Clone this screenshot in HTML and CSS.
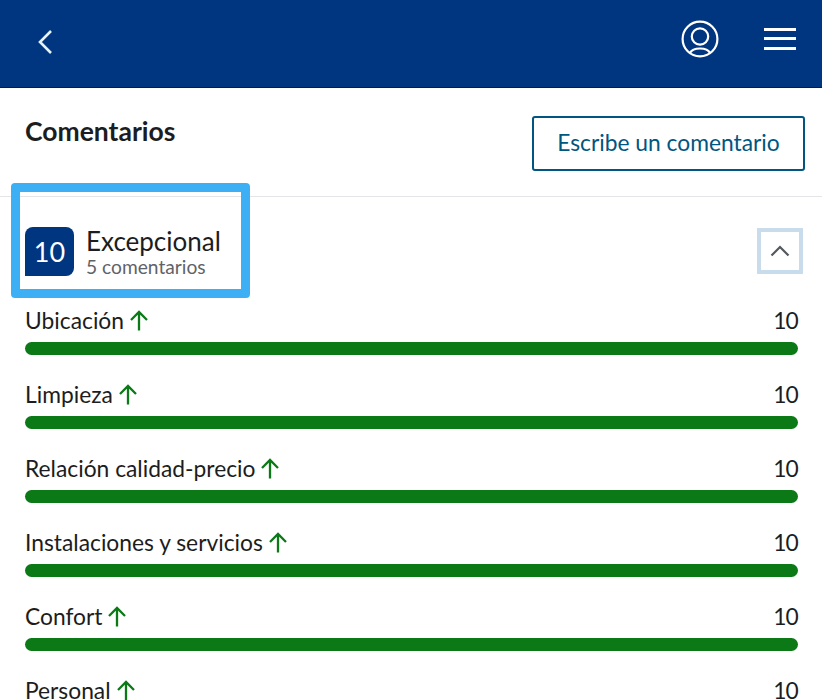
FILE: index.html
```html
<!DOCTYPE html>
<html lang="es">
<head>
    <meta charset="UTF-8">
    <meta name="viewport" content="width=device-width, initial-scale=1.0">
    <title>Comentarios</title>
    <link rel="stylesheet" href="styles.css">
</head>
<body>
    <header class="topbar">
        <svg class="back-icon" width="18" height="26" viewBox="0 0 18 26"><path d="M14 2 L3 13 L14 24" fill="none" stroke="#e6f3fb" stroke-width="2.6"/></svg>
        <div class="topbar-actions">
            <svg width="38" height="38" viewBox="0 0 38 38" fill="none" stroke="#fff" stroke-width="2.2">
                <circle cx="19" cy="19" r="17.4"/>
                <circle cx="19" cy="16.5" r="8.2"/>
                <path d="M9 33 C12 27 26 27 29 33"/>
            </svg>
            <div class="menu-icon"><span></span><span></span><span></span></div>
        </div>
    </header>

    <section class="title-row">
        <h1>Comentarios</h1>
        <button type="button" class="write-btn">Escribe un comentario</button>
    </section>

    <section class="summary">
        <div class="highlight"></div>
        <div class="score">
            <div class="score-badge">10</div>
            <div>
                <div class="score-label">Excepcional</div>
                <div class="score-count">5 comentarios</div>
            </div>
        </div>
        <div class="collapse-btn">
            <svg width="20" height="12" viewBox="0 0 20 12"><path d="M1.5 10.5 L10 2 L18.5 10.5" fill="none" stroke="#55595e" stroke-width="2.2"/></svg>
        </div>
    </section>

    <section class="ratings">
        <div class="rating">
            <div class="rating-head">
                <span class="rating-name">Ubicación <svg class="up" width="20" height="21" viewBox="0 0 20 21"><path d="M10 20.5 V2 M2 10 L10 2 L18 10" fill="none" stroke="#0b7a16" stroke-width="2.3"/></svg></span>
                <span class="rating-value">10</span>
            </div>
            <div class="bar"></div>
        </div>
        <div class="rating">
            <div class="rating-head">
                <span class="rating-name">Limpieza <svg class="up" width="20" height="21" viewBox="0 0 20 21"><path d="M10 20.5 V2 M2 10 L10 2 L18 10" fill="none" stroke="#0b7a16" stroke-width="2.3"/></svg></span>
                <span class="rating-value">10</span>
            </div>
            <div class="bar"></div>
        </div>
        <div class="rating">
            <div class="rating-head">
                <span class="rating-name">Relación calidad-precio <svg class="up" width="20" height="21" viewBox="0 0 20 21"><path d="M10 20.5 V2 M2 10 L10 2 L18 10" fill="none" stroke="#0b7a16" stroke-width="2.3"/></svg></span>
                <span class="rating-value">10</span>
            </div>
            <div class="bar"></div>
        </div>
        <div class="rating">
            <div class="rating-head">
                <span class="rating-name">Instalaciones y servicios <svg class="up" width="20" height="21" viewBox="0 0 20 21"><path d="M10 20.5 V2 M2 10 L10 2 L18 10" fill="none" stroke="#0b7a16" stroke-width="2.3"/></svg></span>
                <span class="rating-value">10</span>
            </div>
            <div class="bar"></div>
        </div>
        <div class="rating">
            <div class="rating-head">
                <span class="rating-name">Confort <svg class="up" width="20" height="21" viewBox="0 0 20 21"><path d="M10 20.5 V2 M2 10 L10 2 L18 10" fill="none" stroke="#0b7a16" stroke-width="2.3"/></svg></span>
                <span class="rating-value">10</span>
            </div>
            <div class="bar"></div>
        </div>
        <div class="rating">
            <div class="rating-head">
                <span class="rating-name">Personal <svg class="up" width="20" height="21" viewBox="0 0 20 21"><path d="M10 20.5 V2 M2 10 L10 2 L18 10" fill="none" stroke="#0b7a16" stroke-width="2.3"/></svg></span>
                <span class="rating-value">10</span>
            </div>
            <div class="bar"></div>
        </div>
    </section>
</body>
</html>
```

FILE: styles.css
```css
html, body {
    height: 700px;
    overflow: hidden;
}
body {
    margin: 0;
    font-family: Lato, "Open Sans", sans-serif;
    color: #1c1d20;
    background-color: #fff;
}
.topbar {
    height: 77px;
    background-color: #00357f;
    border-bottom: 1px solid #0b1a33;
    display: flex;
    align-items: center;
    justify-content: space-between;
    padding: 0 26px 10px 37px;
}
.back-icon {
    margin-top: 6px;
}
.topbar-actions {
    display: flex;
    align-items: center;
    gap: 45px;
}
.menu-icon {
    display: flex;
    flex-direction: column;
    gap: 6.5px;
    width: 32px;
}
.menu-icon span {
    height: 3px;
    background-color: #fff;
}
.title-row {
    height: 108px;
    border-bottom: 1px solid #e3e5e8;
    display: flex;
    justify-content: space-between;
    align-items: flex-start;
    padding: 0 17px 0 25px;
}
.title-row h1 {
    margin: 27px 0 0;
    font-size: 26.5px;
    line-height: 32px;
    font-weight: 700;
}
.write-btn {
    margin-top: 28px;
    width: 273px;
    height: 55px;
    padding: 0 0 3px;
    background-color: #fff;
    border: 2px solid #00567f;
    border-radius: 3px;
    color: #00567f;
    font-family: inherit;
    font-size: 22.8px;
}
.summary {
    position: relative;
    height: 104px;
    display: flex;
    justify-content: space-between;
    align-items: flex-start;
    padding: 0 19px 0 25px;
}
.highlight {
    position: absolute;
    left: 11px;
    top: -14px;
    width: 221px;
    height: 97px;
    border: 9px solid #3db0f5;
    border-radius: 4px;
}
.score {
    display: flex;
    gap: 12px;
    margin-top: 30px;
}
.score-badge {
    width: 49px;
    height: 49px;
    background-color: #00357f;
    border-radius: 8px 8px 8px 0;
    color: #fff;
    font-size: 27px;
    line-height: 49px;
    text-align: center;
}
.score-label {
    font-size: 26px;
    line-height: 30px;
    margin-top: -1px;
}
.score-count {
    font-size: 19.2px;
    line-height: 21px;
    color: #5f6368;
}
.collapse-btn {
    margin-top: 31px;
    width: 38px;
    height: 38px;
    border: 4px solid #c9dcec;
    display: flex;
    align-items: center;
    justify-content: center;
}
.ratings {
    padding: 0 24px 0 25px;
}
.rating {
    height: 74px;
}
.rating-head {
    display: flex;
    justify-content: space-between;
    align-items: center;
    height: 38px;
    font-size: 22.8px;
}
.rating-name {
    display: flex;
    align-items: center;
    gap: 5px;
}
.rating-value {
    letter-spacing: -0.8px;
}
.bar {
    height: 13px;
    margin-top: 3px;
    background-color: #0b7a16;
    border-radius: 7px;
}
```
